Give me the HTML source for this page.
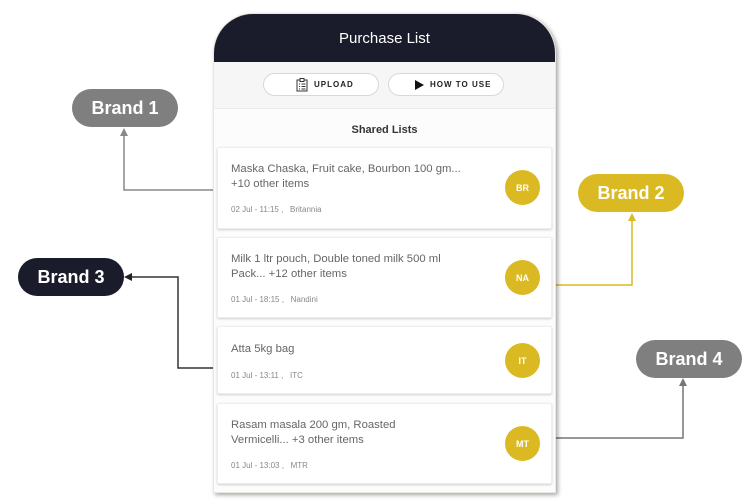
<!DOCTYPE html>
<html><head><meta charset="utf-8"><style>
*{margin:0;padding:0;box-sizing:border-box}
body{width:754px;height:500px;background:#fff;position:relative;overflow:hidden;font-family:"Liberation Sans",sans-serif}
.pill{position:absolute;height:38px;width:106px;border-radius:19px;color:#fff;font-weight:bold;font-size:18px;text-align:center;line-height:38px;font-family:"Liberation Sans",sans-serif}
.phone{position:absolute;left:213px;top:13px;width:343px;height:480px;background:#fcfcfc;border-radius:40px 40px 0 0;overflow:hidden;box-shadow:2px 2px 4px rgba(0,0,0,.35);border:1px solid #e8e8e0}
.hdr{height:48px;background:#1b1c2b;color:#fff;text-align:center;font-size:15px;line-height:50px}
.bar{height:47px;background:#f6f6f6;border-bottom:1px solid #ececec;position:relative}
.btn{position:absolute;top:11px;height:23px;width:116px;border:1px solid #d8d8d8;border-radius:12px;background:#fff;font-size:8px;font-weight:bold;letter-spacing:1px;color:#222;line-height:21px}
.title{text-align:center;font-weight:bold;font-size:11px;color:#333;margin-top:15px}
.card{position:absolute;left:3px;width:335px;background:#fff;border:1px solid #eee;box-shadow:0 1px 2px rgba(0,0,0,.18);border-radius:2px}
.t{position:absolute;left:13px;font-size:11.3px;color:#666;line-height:15px}
.m{position:absolute;left:13px;font-size:8px;color:#888}
.c{position:absolute;left:287px;width:35px;height:35px;border-radius:50%;background:#dbb922;color:#fff;font-weight:bold;font-size:9px;text-align:center;line-height:36px}
</style></head><body>
<svg width="754" height="500" style="position:absolute;left:0;top:0">
<polyline points="213,190 124,190 124,134" fill="none" stroke="#888" stroke-width="1.5"/>
<polygon points="124,128 120,136 128,136" fill="#888"/>
<polyline points="213,368 178,368 178,277 130,277" fill="none" stroke="#333" stroke-width="1.5"/>
<polygon points="124,277 132,273 132,281" fill="#222"/>
<polyline points="556,285 632,285 632,219" fill="none" stroke="#dbb922" stroke-width="1.5"/>
<polygon points="632,213 628,221 636,221" fill="#dbb922"/>
<polyline points="556,438 683,438 683,384" fill="none" stroke="#777" stroke-width="1.5"/>
<polygon points="683,378 679,386 687,386" fill="#777"/>
</svg>
<div class="pill" style="left:72px;top:89px;background:#7f7f7f">Brand 1</div>
<div class="pill" style="left:18px;top:258px;background:#1b1c2b">Brand 3</div>
<div class="pill" style="left:578px;top:174px;background:#dbb922">Brand 2</div>
<div class="pill" style="left:636px;top:340px;background:#7f7f7f">Brand 4</div>
<div class="phone">
<div class="hdr">Purchase List</div>
<div class="bar">
<div class="btn" style="left:49px"><svg width="12" height="14" style="position:absolute;left:32px;top:4px" viewBox="0 0 12 14"><rect x="1" y="2" width="10" height="11" fill="none" stroke="#333" stroke-width="1"/><rect x="4" y="0.5" width="4" height="3" fill="#fff" stroke="#333"/><path d="M3 6h1M5.5 6h4M3 8.5h1M5.5 8.5h4M3 11h1M5.5 11h4" stroke="#333"/></svg><span style="position:absolute;left:50px">UPLOAD</span></div>
<div class="btn" style="left:174px"><svg width="9" height="10" style="position:absolute;left:26px;top:6px"><polygon points="0,0 9,5 0,10" fill="#111"/></svg><span style="position:absolute;left:41px">HOW TO USE</span></div>
</div>
<div class="title">Shared Lists</div>
<div class="card" style="top:133px;height:82px"><div class="t" style="top:14px">Maska Chaska, Fruit cake, Bourbon 100 gm...<br>+10 other items</div><div class="m" style="top:57px">02 Jul - 11:15 ,&nbsp;&nbsp; Britannia</div><div class="c" style="top:22px">BR</div></div>
<div class="card" style="top:223px;height:81px"><div class="t" style="top:14px">Milk 1 ltr pouch, Double toned milk 500 ml<br>Pack... +12 other items</div><div class="m" style="top:57px">01 Jul - 18:15 ,&nbsp;&nbsp; Nandini</div><div class="c" style="top:22px">NA</div></div>
<div class="card" style="top:312px;height:68px"><div class="t" style="top:15px">Atta 5kg bag</div><div class="m" style="top:44px">01 Jul - 13:11 ,&nbsp;&nbsp; ITC</div><div class="c" style="top:16px">IT</div></div>
<div class="card" style="top:389px;height:81px"><div class="t" style="top:14px">Rasam masala 200 gm, Roasted<br>Vermicelli... +3 other items</div><div class="m" style="top:57px">01 Jul - 13:03 ,&nbsp;&nbsp; MTR</div><div class="c" style="top:22px">MT</div></div>
</div>
</body></html>
